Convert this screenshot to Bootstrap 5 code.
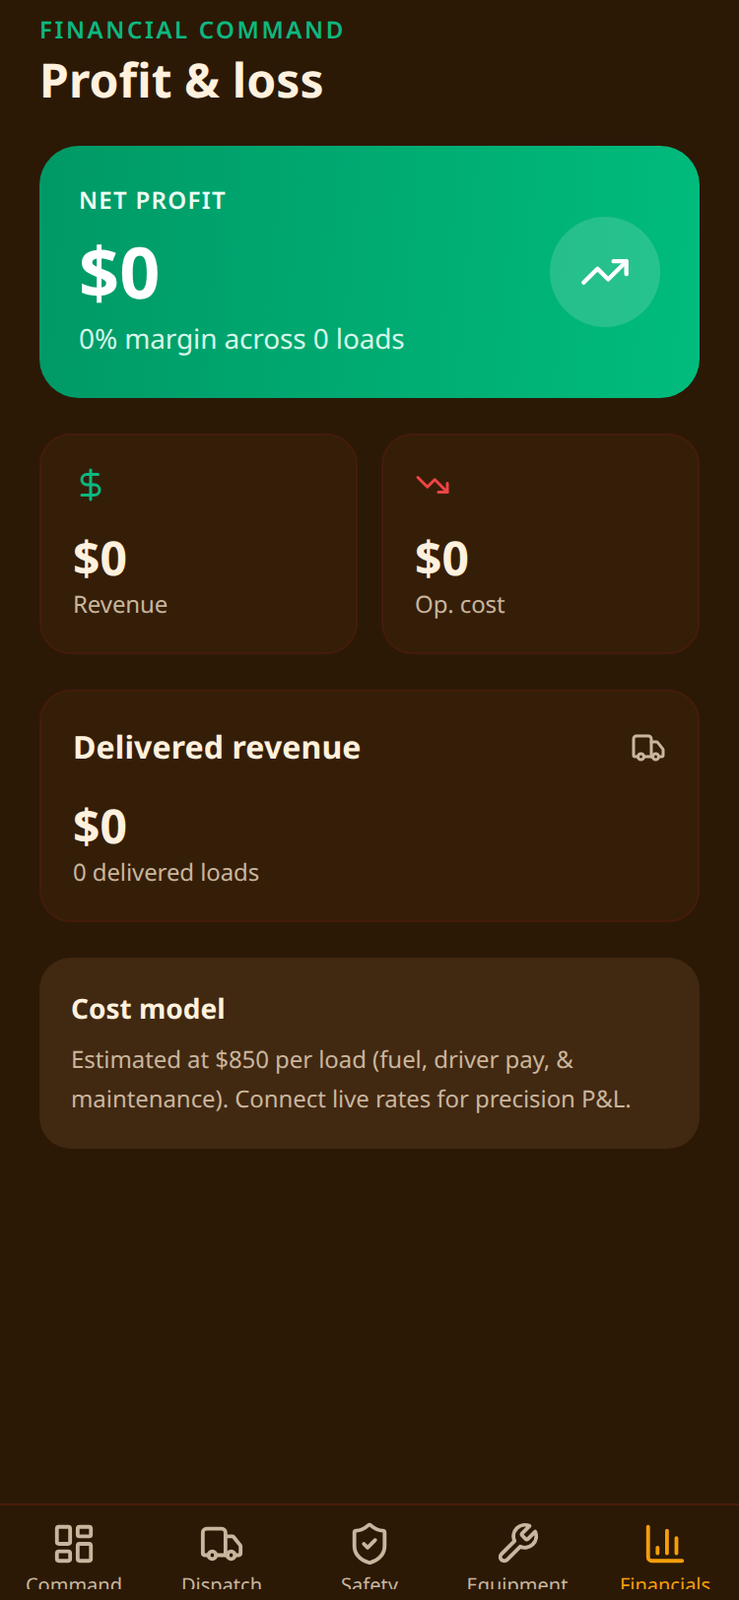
<!DOCTYPE html>
<html lang="en">
<head>
<meta charset="utf-8">
<title>Profit &amp; loss</title>
<link href="https://cdn.jsdelivr.net/npm/bootstrap@5.3.0/dist/css/bootstrap.min.css" rel="stylesheet">
<style>
html,body{height:100%;margin:0}
body{background:#2b1906;font-family:"Noto Sans",sans-serif;color:#fff1de;overflow:hidden;text-rendering:geometricPrecision}
.app-shell{height:1624px;width:750px}
.app-main{padding:14px 40px 0}
.eyebrow{font-size:24px;line-height:33px;font-weight:600;letter-spacing:2.6px;color:#0cb880}
.page-title{font-size:48px;line-height:60px;font-weight:700;letter-spacing:.08px;color:#fff1de;margin:5px 0 0}
.hero{margin-top:36px;height:256px;border-radius:40px;padding:40px;background:linear-gradient(95deg,#009966,#00bc7d);color:#fff}
.hero-label{font-size:24px;line-height:33px;font-weight:600;letter-spacing:1.3px;color:#ecfdf5}
.hero-value{font-size:72px;line-height:80px;font-weight:700;margin-top:16px}
.hero-sub{font-size:28px;line-height:38px;letter-spacing:-.13px;color:#d6f7e8;margin-top:9px;margin-bottom:3px}
.hero-circle{width:112px;height:112px;border-radius:50%;background:rgba(255,255,255,.15)}
.stat-row{margin-top:36px}
.panel{background:#351e08;border:2px solid #451c0a;border-radius:32px;padding:32px}
.stat-panel{flex:1 1 0;height:224px}
.stat-value{font-size:48px;line-height:59px;font-weight:700;margin-top:27px}
.stat-label{font-size:24px;line-height:36px;letter-spacing:-.1px;color:#c9b69e}
.delivered{margin-top:36px;height:236px;padding-top:35px}
.delivered-title{font-size:32px;line-height:44px;font-weight:700;letter-spacing:.12px}
.delivered-value{margin-top:28px}
.note{margin-top:36px;height:194px;background:#412811;border-radius:32px;padding:33px 32px 32px}
.note-title{font-size:28px;line-height:38px;font-weight:700;margin:0}
.note-text{font-size:24px;line-height:40px;letter-spacing:-.07px;color:#c9b69e;margin:13px 0 0}
.tabbar{height:98px;border-top:2px solid #471e0a;background:#2b1906;padding-bottom:11px}
.tab-item{flex:1 1 0;overflow:hidden;color:#c9b69e;padding-top:16px}
.tab-item.on{color:#f59e0b}
.tab-text{font-size:20px;line-height:28px;white-space:nowrap;margin-top:5px}
.ico{fill:none;stroke:currentColor;stroke-width:2;stroke-linecap:round;stroke-linejoin:round;display:block;flex-shrink:0}
.ico-36{width:36px;height:36px}
.ico-46{width:46px;height:46px}
.ico-52{width:52px;height:52px}
.c-green{color:#0cb880}
.c-red{color:#ef4444}
.c-muted{color:#c9b69e}
</style>
</head>
<body>
<div class="app-shell d-flex flex-column">
  <main class="app-main flex-grow-1">
    <div class="eyebrow">FINANCIAL COMMAND</div>
    <h1 class="page-title">Profit &amp; loss</h1>

    <section class="hero d-flex align-items-center justify-content-between">
      <div>
        <div class="hero-label">NET PROFIT</div>
        <div class="hero-value">$0</div>
        <div class="hero-sub">0% margin across 0 loads</div>
      </div>
      <div class="hero-circle d-flex align-items-center justify-content-center">
        <svg class="ico ico-52" viewBox="0 0 24 24"><polyline points="22 7 13.5 15.5 8.5 10.5 2 17"/><polyline points="16 7 22 7 22 13"/></svg>
      </div>
    </section>

    <div class="stat-row d-flex gap-4">
      <div class="panel stat-panel">
        <svg class="ico ico-36 c-green" viewBox="0 0 24 24"><line x1="12" x2="12" y1="2" y2="22"/><path d="M17 5H9.5a3.5 3.5 0 0 0 0 7h5a3.5 3.5 0 0 1 0 7H6"/></svg>
        <div class="stat-value">$0</div>
        <div class="stat-label">Revenue</div>
      </div>
      <div class="panel stat-panel">
        <svg class="ico ico-36 c-red" viewBox="0 0 24 24"><polyline points="22 17 13.5 8.5 8.5 13.5 2 7"/><polyline points="16 17 22 17 22 11"/></svg>
        <div class="stat-value">$0</div>
        <div class="stat-label">Op. cost</div>
      </div>
    </div>

    <section class="panel delivered">
      <div class="d-flex align-items-center justify-content-between">
        <div class="delivered-title">Delivered revenue</div>
        <svg class="ico ico-36 c-muted" viewBox="0 0 24 24"><path d="M14 18V6a2 2 0 0 0-2-2H4a2 2 0 0 0-2 2v11a1 1 0 0 0 1 1h2"/><path d="M15 18H9"/><path d="M19 18h2a1 1 0 0 0 1-1v-3.65a1 1 0 0 0-.22-.624l-3.48-4.35A1 1 0 0 0 17.52 8H14"/><circle cx="17" cy="18" r="2"/><circle cx="7" cy="18" r="2"/></svg>
      </div>
      <div class="stat-value delivered-value">$0</div>
      <div class="stat-label">0 delivered loads</div>
    </section>

    <section class="note">
      <h2 class="note-title">Cost model</h2>
      <p class="note-text">Estimated at $850 per load (fuel, driver pay, &amp; maintenance). Connect live rates for precision P&amp;L.</p>
    </section>
  </main>

  <nav class="tabbar d-flex flex-shrink-0">
    <div class="tab-item d-flex flex-column align-items-center">
      <svg class="ico ico-46" viewBox="0 0 24 24"><rect width="7" height="9" x="3" y="3" rx="1"/><rect width="7" height="5" x="14" y="3" rx="1"/><rect width="7" height="9" x="14" y="12" rx="1"/><rect width="7" height="5" x="3" y="16" rx="1"/></svg>
      <div class="tab-text">Command</div>
    </div>
    <div class="tab-item d-flex flex-column align-items-center">
      <svg class="ico ico-46" viewBox="0 0 24 24"><path d="M14 18V6a2 2 0 0 0-2-2H4a2 2 0 0 0-2 2v11a1 1 0 0 0 1 1h2"/><path d="M15 18H9"/><path d="M19 18h2a1 1 0 0 0 1-1v-3.65a1 1 0 0 0-.22-.624l-3.48-4.35A1 1 0 0 0 17.52 8H14"/><circle cx="17" cy="18" r="2"/><circle cx="7" cy="18" r="2"/></svg>
      <div class="tab-text">Dispatch</div>
    </div>
    <div class="tab-item d-flex flex-column align-items-center">
      <svg class="ico ico-46" viewBox="0 0 24 24"><path d="M20 13c0 5-3.500 7.500-7.660 8.950a1 1 0 0 1-.67-.01C7.500 20.500 4 18 4 13V6a1 1 0 0 1 1-1c2 0 4.500-1.200 6.240-2.720a1.170 1.170 0 0 1 1.520 0C14.510 3.810 17 5 19 5a1 1 0 0 1 1 1z"/><path d="m9 12 2 2 4-4"/></svg>
      <div class="tab-text">Safety</div>
    </div>
    <div class="tab-item d-flex flex-column align-items-center">
      <svg class="ico ico-46" viewBox="0 0 24 24"><path d="M14.700 6.300a1 1 0 0 0 0 1.400l1.600 1.600a1 1 0 0 0 1.400 0l3.770-3.770a6 6 0 0 1-7.940 7.940l-6.910 6.910a2.120 2.120 0 0 1-3-3l6.910-6.910a6 6 0 0 1 7.940-7.940l-3.760 3.760z"/></svg>
      <div class="tab-text">Equipment</div>
    </div>
    <div class="tab-item on d-flex flex-column align-items-center">
      <svg class="ico ico-46" viewBox="0 0 24 24"><path d="M3 3v16a2 2 0 0 0 2 2h16"/><path d="M18 17V9"/><path d="M13 17V5"/><path d="M8 17v-3"/></svg>
      <div class="tab-text">Financials</div>
    </div>
  </nav>
</div>
<script src="https://cdn.jsdelivr.net/npm/bootstrap@5.3.0/dist/js/bootstrap.bundle.min.js"></script>
</body>
</html>
